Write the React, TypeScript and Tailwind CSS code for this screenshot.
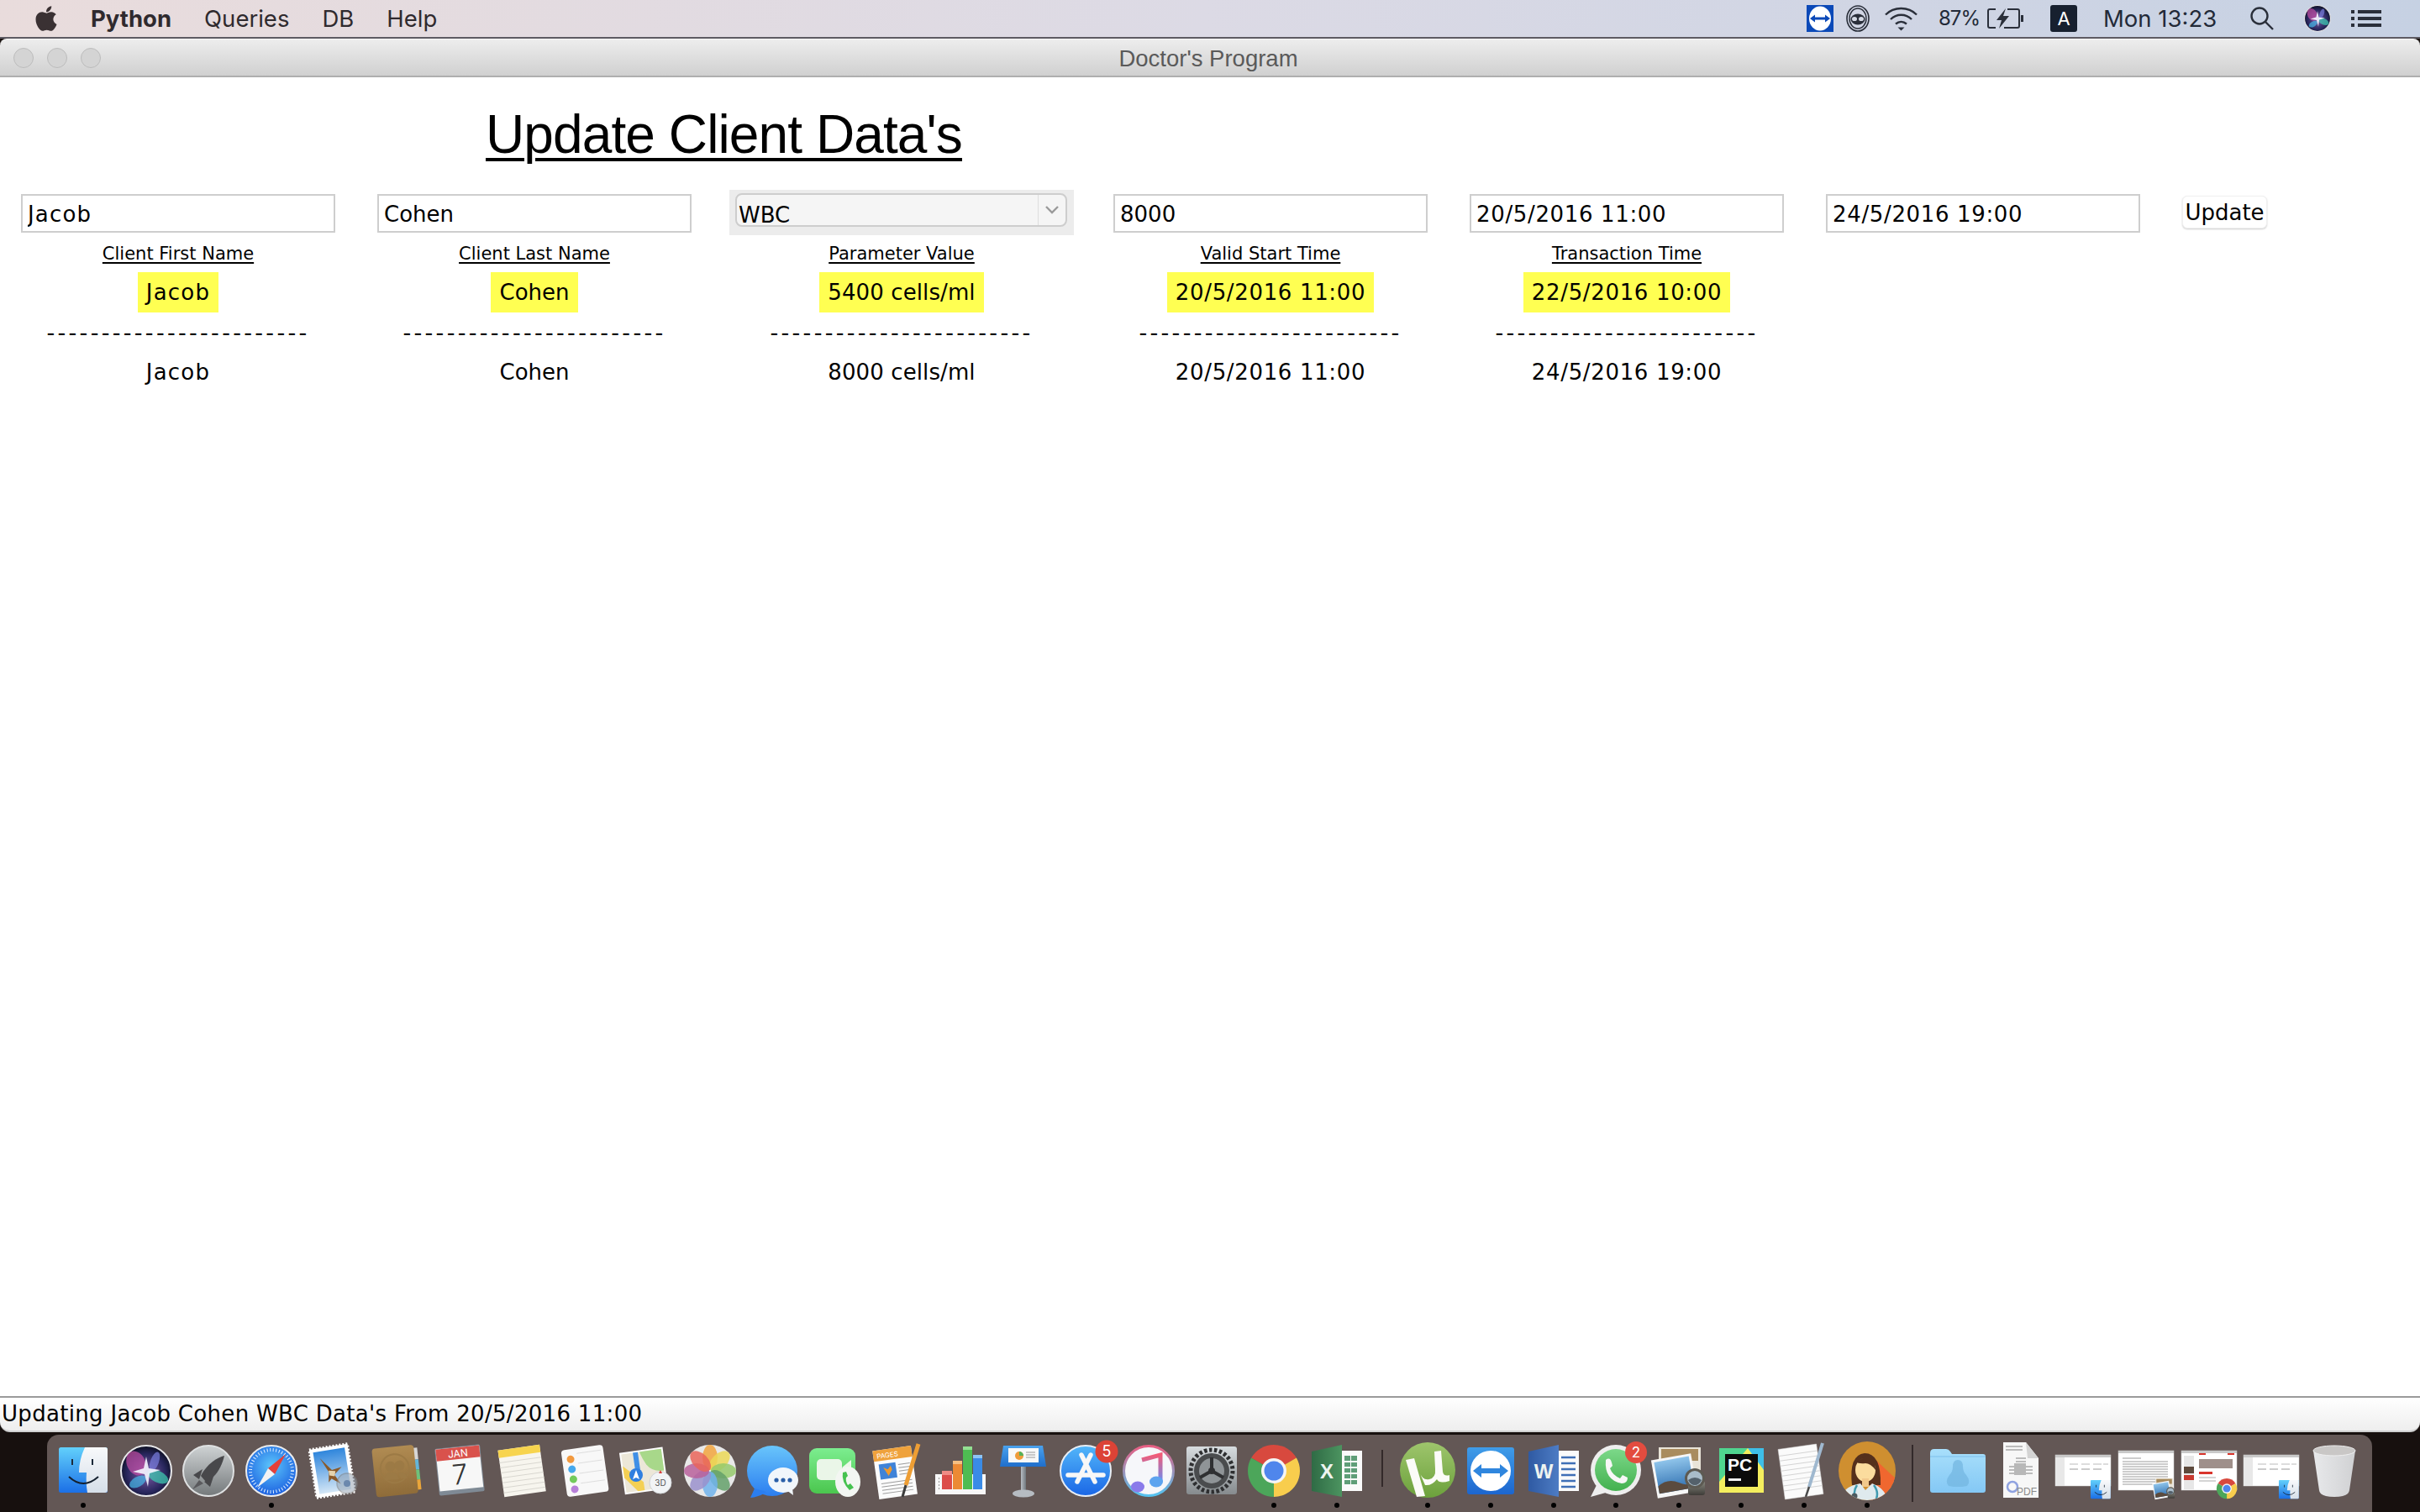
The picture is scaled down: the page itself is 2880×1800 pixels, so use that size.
import * as React from 'react';
import { FaApple } from 'react-icons/fa';

const body = "font-['DejaVu_Sans',sans-serif]";

const nameTrack = 'tracking-[1.2px]';
const dateTrack = 'tracking-[0.65px]';

const columns = [
  { key: 'first', label: 'Client First Name', current: 'Jacob', next: 'Jacob', track: nameTrack },
  { key: 'last', label: 'Client Last Name', current: 'Cohen', next: 'Cohen', track: '' },
  { key: 'param', label: 'Parameter Value', current: '5400 cells/ml', next: '8000 cells/ml', track: 'tracking-[0.1px]' },
  { key: 'start', label: 'Valid Start Time', current: '20/5/2016 11:00', next: '20/5/2016 11:00', track: dateTrack },
  { key: 'trans', label: 'Transaction Time', current: '22/5/2016 10:00', next: '24/5/2016 19:00', track: dateTrack },
];

function Grad({ id, from, to, h }: { id: string; from: string; to: string; h?: boolean }) {
  return (
    <linearGradient id={id} x1="0" y1="0" x2={h ? '1' : '0'} y2={h ? '0' : '1'}>
      <stop offset="0" stopColor={from} />
      <stop offset="1" stopColor={to} />
    </linearGradient>
  );
}

function Ico({ children }: { children: React.ReactNode }) {
  return (
    <svg viewBox="0 0 72 72" className="h-[72px] w-[72px] overflow-visible">
      {children}
    </svg>
  );
}

/* ---------- dock drawings (72 box, pixel units) ---------- */

function FinderArt() {
  return (
    <g>
      <defs>
        <Grad id="fnb" from="#62d0fb" to="#1b6fe6" />
        <Grad id="fnw" from="#f8f9fb" to="#d6dfe9" />
      </defs>
      <rect x="7" y="9" width="58" height="54" rx="2.5" fill="url(#fnb)" />
      <path d="M38 9H62q3 0 3 3V60q0 3-3 3H41Q39 52 40 39H31Q31 24 38 9Z" fill="url(#fnw)" />
      <path d="M23 23v7M47 23v7" stroke="#1c2a3a" strokeWidth="2" />
      <path d="M19 44Q36 60 54 44" stroke="#14202e" strokeWidth="2" fill="none" />
    </g>
  );
}

function SiriArt() {
  return (
    <g>
      <defs>
        <radialGradient id="sir" cx="0.5" cy="0.55" r="0.55">
          <stop offset="0" stopColor="#7f5ca8" />
          <stop offset="0.7" stopColor="#27265c" />
          <stop offset="1" stopColor="#0c0f20" />
        </radialGradient>
      </defs>
      <circle cx="36" cy="37" r="30" fill="url(#sir)" stroke="#e8e8ea" strokeWidth="2" />
      <ellipse cx="24" cy="28" rx="11" ry="15" fill="#c34fa5" opacity="0.7" transform="rotate(-25 24 28)" />
      <ellipse cx="50" cy="44" rx="13" ry="7" fill="#3fd0b4" opacity="0.7" transform="rotate(25 50 44)" />
      <ellipse cx="26" cy="50" rx="11" ry="6" fill="#47b8e8" opacity="0.7" transform="rotate(-30 26 50)" />
      <ellipse cx="46" cy="26" rx="5" ry="12" fill="#7a7fe0" opacity="0.7" transform="rotate(20 46 26)" />
      <path d="M36 20L39 34 53 36 40 40 38 56 34 41 20 38 33 34Z" fill="#f4f6ff" opacity="0.9" />
    </g>
  );
}

function ChromeArt() {
  return (
    <g>
      <path d="M36 37L9.15 21.5A31 31 0 0 1 62.85 21.5Z" fill="#d8493e" />
      <path d="M36 37L62.85 21.5A31 31 0 0 1 36 68Z" fill="#f8cd4d" />
      <path d="M36 37L36 68A31 31 0 0 1 9.15 21.5Z" fill="#4ca65a" />
      <circle cx="36" cy="37" r="15" fill="#f5f5f5" />
      <circle cx="36" cy="37" r="11.5" fill="#4f86ec" />
    </g>
  );
}

function PreviewArt() {
  return (
    <g>
      <defs>
        <Grad id="pvs" from="#8fc4ea" to="#2f6fb0" />
        <Grad id="pvl" from="#8a8a80" to="#3e3c38" />
      </defs>
      <rect x="12" y="9" width="50" height="44" fill="#e9e4d8" />
      <rect x="15" y="11" width="44" height="14" fill="#a98c5e" />
      <g transform="rotate(-10 30 40)">
        <rect x="6" y="20" width="48" height="46" fill="#f6f6f6" />
        <rect x="9" y="23" width="42" height="38" fill="url(#pvs)" />
        <path d="M9 52Q22 44 34 52T51 50V61H9Z" fill="#5b4b3e" />
      </g>
      <rect x="47" y="49" width="20" height="17" rx="3" fill="url(#pvl)" />
      <circle cx="55" cy="46" r="12" fill="#5d5a52" />
      <circle cx="55" cy="46" r="9" fill="#a9bcc9" />
      <path d="M47 48Q55 42 63 48 60 54 55 54 50 54 47 48Z" fill="#54616b" />
    </g>
  );
}

function Finder() {
  return <Ico><FinderArt /></Ico>;
}

function Siri() {
  return <Ico><SiriArt /></Ico>;
}

function Launchpad() {
  return (
    <Ico>
      <defs><Grad id="lpg" from="#cfd3d4" to="#74797b" /></defs>
      <circle cx="36" cy="37" r="30" fill="url(#lpg)" stroke="#dfe1e2" strokeWidth="2" />
      <path d="M55 19C44 22 33 31 27 43L33 50C45 45 52 32 55 19Z" fill="#48484b" />
      <path d="M29 35L18 42 25 47ZM42 44L38 56 31 50Z" fill="#48484b" />
      <path d="M25 48L17 59 30 52Z" fill="#5a5a5d" />
    </Ico>
  );
}

function Safari() {
  return (
    <Ico>
      <defs>
        <radialGradient id="sfg" cx="0.5" cy="0.4" r="0.6">
          <stop offset="0" stopColor="#5cc6fb" />
          <stop offset="1" stopColor="#1b5fe0" />
        </radialGradient>
      </defs>
      <circle cx="36" cy="37" r="30" fill="url(#sfg)" stroke="#ececec" strokeWidth="2" />
      <circle cx="36" cy="37" r="25" fill="none" stroke="#dfeeff" strokeWidth="4" strokeDasharray="1 2.6" />
      <path d="M53 17L40 41 32 34Z" fill="#e5403a" />
      <path d="M19 57L40 41 32 34Z" fill="#f3f3f3" />
    </Ico>
  );
}

function Mail() {
  return (
    <Ico>
      <defs><Grad id="mlg" from="#2f86dc" to="#d3e6f6" /></defs>
      <g transform="rotate(-9 34 36)">
        <rect x="11" y="8" width="46" height="58" fill="#fff" stroke="#fff" strokeWidth="3" strokeDasharray="2 2" />
        <rect x="15" y="12" width="38" height="50" fill="url(#mlg)" />
        <path d="M22 20L34 36 46 34 36 42 42 54 32 46 28 50 30 38Z" fill="#8a5a2a" />
        <path d="M30 36L38 38 36 44 30 42Z" fill="#e5d3ad" />
      </g>
      <circle cx="52" cy="52" r="12" fill="#9aa7b5" opacity="0.55" stroke="#7f7f7f" strokeWidth="1.5" />
      <circle cx="52" cy="52" r="4" fill="#6b88ad" />
    </Ico>
  );
}

function Contacts() {
  return (
    <Ico>
      <defs><Grad id="ctg" from="#b08b52" to="#8f6c39" /></defs>
      <g transform="rotate(-6 36 36)">
        <rect x="56" y="12" width="7" height="14" fill="#d7d7d7" />
        <rect x="56" y="26" width="7" height="12" fill="#64b6d9" />
        <rect x="56" y="38" width="7" height="12" fill="#6fc27a" />
        <rect x="56" y="50" width="7" height="12" fill="#eaa63a" />
        <rect x="9" y="8" width="50" height="58" rx="4" fill="url(#ctg)" />
        <circle cx="34" cy="34" r="17" fill="none" stroke="#9c7a45" strokeWidth="2" />
        <circle cx="29" cy="31" r="6" fill="#9c7a45" />
        <circle cx="40" cy="31" r="6" fill="#9c7a45" />
        <path d="M20 47Q22 37 29 38 35 37 38 47ZM37 40Q45 37 48 47H40Z" fill="#9c7a45" />
      </g>
    </Ico>
  );
}

function Calendar() {
  return (
    <Ico>
      <g transform="rotate(-6 36 36)">
        <rect x="9" y="8" width="54" height="56" rx="2" fill="#7f8a95" />
        <rect x="10" y="9" width="52" height="50" fill="#f7f7f7" />
        <rect x="10" y="9" width="52" height="14" fill="#d9524c" />
        <text x="36" y="20.5" textAnchor="middle" fontSize="12" fill="#fff" fontFamily="Inter, sans-serif">JAN</text>
        <text x="36" y="53" textAnchor="middle" fontSize="33" fill="#333" fontFamily="Inter, sans-serif" fontWeight="300">7</text>
      </g>
    </Ico>
  );
}

function Notes() {
  return (
    <Ico>
      <g transform="rotate(-8 36 36)">
        <rect x="11" y="9" width="50" height="56" fill="#f7f5ee" />
        <rect x="11" y="9" width="50" height="9" fill="#f7d44e" />
        <path d="M11 24H61M11 30H61M11 36H61M11 42H61M11 48H61M11 54H61M11 60H61" stroke="#d9d7d0" strokeWidth="1" />
      </g>
    </Ico>
  );
}

function Reminders() {
  return (
    <Ico>
      <g transform="rotate(-8 36 36)">
        <rect x="11" y="9" width="50" height="56" rx="4" fill="#f8f8f8" />
        <circle cx="21" cy="21" r="4.5" fill="#f29a3f" />
        <circle cx="21" cy="33" r="4.5" fill="#44a8ec" />
        <circle cx="21" cy="45" r="4.5" fill="#72ca5c" />
        <circle cx="21" cy="57" r="4.5" fill="#b77fd8" />
        <path d="M29 15H58M29 27H58M29 39H58M29 51H58" stroke="#dedede" strokeWidth="1" />
      </g>
    </Ico>
  );
}

function Maps() {
  return (
    <Ico>
      <g transform="rotate(-8 32 36)">
        <rect x="6" y="12" width="52" height="50" fill="#fdfdfd" />
        <rect x="8" y="14" width="48" height="46" fill="#ece7d8" />
        <path d="M30 14H56V40Q42 40 36 30 32 22 30 14Z" fill="#a8d88a" />
        <path d="M8 28L30 50V60H22L8 42Z" fill="#f4d053" />
        <path d="M22 14H28V44H22Z" fill="#3f8fe6" />
      </g>
      <circle cx="23" cy="42" r="8" fill="#2f7fe0" />
      <path d="M23 36L27 47 23 45 19 47Z" fill="#fff" />
      <circle cx="52" cy="51" r="13" fill="#f2f4f6" stroke="#cfd3d6" />
      <text x="52" y="55" textAnchor="middle" fontSize="10" fill="#555" fontFamily="Inter, sans-serif">3D</text>
      <path d="M52 36L54 40H50Z" fill="#d9423c" />
    </Ico>
  );
}

function Photos() {
  const petals = ['#f2a53e', '#ebd857', '#95c96b', '#64a06a', '#70b3ec', '#9a90cc', '#b9609b', '#e9655a'];
  return (
    <Ico>
      <circle cx="36" cy="37" r="31" fill="#e8e8e8" />
      {petals.map((c, i) => (
        <ellipse key={c} cx="36" cy="21" rx="9" ry="15" fill={c} opacity="0.85" transform={`rotate(${i * 45} 36 37)`} />
      ))}
    </Ico>
  );
}

function Messages() {
  return (
    <Ico>
      <defs><Grad id="msg" from="#69c5fb" to="#2b7ef0" /></defs>
      <circle cx="35" cy="37" r="30" fill="url(#msg)" />
      <path d="M14 58L9 69Q20 68 28 62Z" fill="#2b7ef0" />
      <ellipse cx="48" cy="48" rx="18" ry="15" fill="#f1f6fb" />
      <path d="M52 60L60 66 59 57Z" fill="#f1f6fb" />
      <circle cx="40" cy="48" r="2.6" fill="#2b5fa8" />
      <circle cx="48" cy="48" r="2.6" fill="#2b5fa8" />
      <circle cx="56" cy="48" r="2.6" fill="#2b5fa8" />
    </Ico>
  );
}

function FaceTime() {
  return (
    <Ico>
      <defs><Grad id="ftg" from="#7ced8f" to="#4bc64e" /></defs>
      <rect x="5" y="10" width="55" height="54" rx="9" fill="url(#ftg)" />
      <rect x="14" y="23" width="30" height="25" rx="5" fill="#eaf6e8" />
      <path d="M44 33L55 24V46Z" fill="#eaf6e8" />
      <ellipse cx="51" cy="50" rx="15" ry="18" fill="#f3f6f2" />
      <path d="M45 39Q43 50 53 60L58 57 54 52 51 54Q48 49 49 45L51 43 49 38Z" fill="#46c24f" />
    </Ico>
  );
}

function Pages() {
  return (
    <Ico>
      <g transform="rotate(-8 32 38)">
        <rect x="9" y="10" width="46" height="58" fill="#fbfbfb" />
        <rect x="9" y="10" width="46" height="13" fill="#efa23c" />
        <text x="13" y="20" fontSize="8" fill="#fff" fontFamily="Inter, sans-serif">PAGES</text>
        <rect x="14" y="27" width="20" height="18" fill="#3f83d8" />
        <path d="M24 42L19 31 24 34 28 30 29 35Z" fill="#ef9a2e" />
        <path d="M37 30H51M37 34H51M37 38H51M37 42H51M14 50H51M14 54H51M14 58H51M14 62H51" stroke="#9d9d9d" strokeWidth="1" />
      </g>
      <path d="M60 5L45 54" stroke="#ee9e34" strokeWidth="5" />
      <path d="M45 54L41 68" stroke="#3c3c3c" strokeWidth="3" />
    </Ico>
  );
}

function Numbers() {
  return (
    <Ico>
      <rect x="6" y="41" width="60" height="24" fill="#f7f7f7" />
      <path d="M10 46h1M10 50h1M10 54h1M10 58h1" stroke="#999" strokeWidth="2" />
      <rect x="14" y="37" width="12" height="22" fill="#dc4d4a" />
      <rect x="14" y="37" width="12" height="5" fill="#ef8b85" />
      <rect x="27" y="25" width="11" height="34" fill="#ec8a35" />
      <rect x="27" y="25" width="11" height="4" fill="#f5bf82" />
      <rect x="39" y="8" width="11" height="51" fill="#4ebc52" />
      <rect x="39" y="8" width="11" height="4" fill="#93e092" />
      <rect x="51" y="18" width="11" height="41" fill="#3a8be6" />
      <rect x="51" y="18" width="11" height="4" fill="#8dc4f4" />
    </Ico>
  );
}

function Keynote() {
  return (
    <Ico>
      <defs>
        <Grad id="kng" from="#4aa2ee" to="#1f6ecb" />
        <Grad id="kns" from="#b8bec4" to="#70777d" h />
      </defs>
      <rect x="33" y="32" width="6" height="30" fill="url(#kns)" />
      <ellipse cx="36" cy="64" rx="13" ry="4.5" fill="#b6bcc2" />
      <path d="M12 7H59L63 32H8Z" fill="url(#kng)" />
      <rect x="18" y="10" width="36" height="17" fill="#f8f8f8" />
      <circle cx="31" cy="19" r="5" fill="#ef9c3a" />
      <path d="M31 19V14A5 5 0 0 1 36 19Z" fill="#55b15a" />
      <path d="M39 15H50M39 18H50M39 21H50" stroke="#999" strokeWidth="1" />
    </Ico>
  );
}

function AppStore() {
  return (
    <Ico>
      <defs><Grad id="asg" from="#52b6f9" to="#1a66e6" /></defs>
      <circle cx="36" cy="37" r="30" fill="url(#asg)" stroke="#e9eef4" strokeWidth="2" />
      <path d="M31 18L47 50M42 18L26 50" stroke="#f7f7f7" strokeWidth="5.5" strokeLinecap="round" />
      <path d="M15 42H57" stroke="#f7f7f7" strokeWidth="5.5" strokeLinecap="round" />
      <circle cx="61" cy="14" r="13.5" fill="#dc4336" />
      <text x="61" y="20" textAnchor="middle" fontSize="18" fill="#fff" fontFamily="Inter, sans-serif">5</text>
    </Ico>
  );
}

function Music() {
  return (
    <Ico>
      <defs>
        <Grad id="mua" from="#e75f83" to="#54c3f0" />
        <Grad id="mub" from="#f25c78" to="#6b8cf0" />
      </defs>
      <circle cx="36" cy="37" r="29.5" fill="#f6f7fa" stroke="url(#mua)" strokeWidth="3" />
      <path d="M28 24L50 18V50" fill="none" stroke="url(#mub)" strokeWidth="5" />
      <path d="M28 24V56" fill="none" stroke="url(#mub)" strokeWidth="5" />
      <ellipse cx="23" cy="56" rx="8" ry="6.5" fill="#8a7bea" />
      <ellipse cx="45" cy="50" rx="8" ry="6.5" fill="#5da4ef" />
    </Ico>
  );
}

function SysPrefs() {
  return (
    <Ico>
      <defs><Grad id="spg" from="#d7dcdf" to="#868b8e" /></defs>
      <rect x="6" y="8" width="60" height="57" rx="3" fill="url(#spg)" />
      <circle cx="36" cy="37" r="25" fill="none" stroke="#2e2f31" strokeWidth="5" strokeDasharray="3.5 2.5" />
      <circle cx="36" cy="37" r="21" fill="#4a4c4e" />
      <circle cx="36" cy="37" r="15" fill="#8f9497" />
      <path d="M36 37V21M36 37L50 45M36 37L22 45" stroke="#2f3032" strokeWidth="4" />
      <circle cx="36" cy="37" r="4" fill="#2f3032" />
    </Ico>
  );
}

function Chrome() {
  return <Ico><ChromeArt /></Ico>;
}

function Book({ id, from, to, letter, line }: { id: string; from: string; to: string; letter: string; line: string }) {
  return (
    <Ico>
      <defs><Grad id={id} from={from} to={to} h /></defs>
      <rect x="42" y="13" width="24" height="48" fill="#fafafa" />
      {letter === 'X' ? (
        <path d="M45 19h7v6h-7zM53 19h7v6h-7zM45 27h7v5h-7zM53 27h7v5h-7zM45 34h7v5h-7zM53 34h7v5h-7zM45 41h7v5h-7zM53 41h7v5h-7zM45 48h7v5h-7zM53 48h7v5h-7z" fill={line} />
      ) : (
        <path d="M45 21H62M45 28H62M45 35H62M45 42H62M45 49H62M45 56H62" stroke={line} strokeWidth="2.5" />
      )}
      <path d="M6 14L42 6V68L6 61Z" fill={`url(#${id})`} />
      <text x="24" y="46" textAnchor="middle" fontSize="24" fontWeight="600" fill="#eef4f0" fontFamily="'Liberation Sans', sans-serif">{letter}</text>
    </Ico>
  );
}

function Torrent() {
  return (
    <Ico>
      <defs><Grad id="utg" from="#9ec56c" to="#6ca13c" /></defs>
      <circle cx="36" cy="36" r="33" fill="url(#utg)" />
      <path d="M10 24L20 22 33 67 23 68Z" fill="#fbfbf8" />
      <path d="M26 38Q30 49 38 47 46 45 45 35L44 14 52 13 54 38Q55 44 62 42L62 49Q50 53 47 47 41 55 33 54Z" fill="#fbfbf8" />
    </Ico>
  );
}

function TeamViewer() {
  return (
    <Ico>
      <defs><Grad id="tvg" from="#3f9ce8" to="#1c66cf" /></defs>
      <rect x="8" y="9" width="56" height="56" rx="3" fill="url(#tvg)" />
      <circle cx="36" cy="37" r="24" fill="#fff" />
      <path d="M15 37L25 29V34H47V29L57 37 47 45V40H25V45Z" fill="#2f86de" />
    </Ico>
  );
}

function WhatsApp() {
  return (
    <Ico>
      <defs><Grad id="wag" from="#7cd889" to="#43b14f" /></defs>
      <circle cx="36" cy="36" r="30" fill="#eeeeee" />
      <path d="M14 52L6 68 24 63Z" fill="#eeeeee" />
      <circle cx="36" cy="36" r="25" fill="url(#wag)" />
      <path d="M24 24Q29 20 31 27L32 31 29 34Q32 42 41 46L44 42 50 45Q50 52 43 52 22 48 24 24Z" fill="#f7f7f7" />
      <circle cx="60" cy="15" r="13" fill="#e34c3f" />
      <text x="60" y="21" textAnchor="middle" fontSize="17" fill="#fff" fontFamily="Inter, sans-serif">2</text>
    </Ico>
  );
}

function Preview() {
  return <Ico><PreviewArt /></Ico>;
}

function PyCharm() {
  return (
    <Ico>
      <rect x="10" y="10" width="53" height="53" fill="#f4ee5e" />
      <path d="M10 10H44L10 50Z" fill="#4fd58f" />
      <path d="M44 10H63V36Z" fill="#3ebfe8" />
      <rect x="17" y="17" width="39" height="39" fill="#0b0b0b" />
      <text x="20" y="37" fontSize="21" fontWeight="700" fill="#fff" fontFamily="'Liberation Sans', sans-serif">PC</text>
      <rect x="21" y="46" width="15" height="3" fill="#f2f2f2" />
    </Ico>
  );
}

function TextEdit() {
  return (
    <Ico>
      <g transform="rotate(-8 32 38)">
        <rect x="9" y="8" width="46" height="60" fill="#fbfbfb" stroke="#dddddd" strokeWidth="0.5" />
        <path d="M9 16H55M9 22H55M9 28H55M9 34H55M9 40H55M9 46H55M9 52H55M9 58H55" stroke="#d4d4d4" strokeWidth="1" />
      </g>
      <path d="M58 4L42 56" stroke="#9fb8cf" strokeWidth="4" />
      <path d="M42 56L38 68" stroke="#4b4b4b" strokeWidth="2.5" />
    </Ico>
  );
}

function Doctor() {
  return (
    <Ico>
      <defs>
        <clipPath id="dcc"><ellipse cx="36" cy="37" rx="34" ry="35" /></clipPath>
      </defs>
      <g clipPath="url(#dcc)">
        <rect x="0" y="0" width="72" height="72" fill="#cf8f30" />
        <path d="M42 20L72 48V72H40Z" fill="#f0672f" />
        <path d="M18 54Q14 18 33 16 53 16 52 54Z" fill="#55301c" />
        <ellipse cx="34" cy="36" rx="12" ry="14" fill="#fbdc9e" />
        <path d="M30 46H38V56H30Z" fill="#f2c98c" />
        <path d="M22 26Q32 22 36 18 47 24 46 36 40 28 34 28 26 29 22 26Z" fill="#55301c" />
        <path d="M4 72Q6 56 28 52L34 60 42 52Q58 58 60 72Z" fill="#dfeaee" />
        <path d="M24 54Q20 60 21 66M44 54Q50 62 47 70" stroke="#3f9ab0" strokeWidth="2.5" fill="none" />
        <circle cx="21" cy="67" r="3.5" fill="#4c5a60" />
      </g>
    </Ico>
  );
}

function Folder() {
  return (
    <Ico>
      <defs><Grad id="fdg" from="#a8dffb" to="#84c8f5" /></defs>
      <path d="M3 16Q3 11 8 11H22Q25 11 27 14L29 17H66Q69 17 69 20V60Q69 63 66 63H6Q3 63 3 60Z" fill="url(#fdg)" />
      <path d="M3 20H69" stroke="#7fc0ec" strokeWidth="1" />
      <path d="M36 24Q42 24 42 32 42 38 46 42 52 50 47 55L41 56H31L25 55Q20 50 26 42 30 38 30 32 30 24 36 24Z" fill="#72b5e0" opacity="0.7" />
    </Ico>
  );
}

function Pdf() {
  return (
    <Ico>
      <path d="M15 3H42L57 22V69H15Z" fill="#f7f7f7" />
      <path d="M42 3L57 22H44Z" fill="#d4d4d4" />
      <path d="M18 8H38M18 12H38M30 22H42M30 26H42M22 32H50M22 36H50M22 40H50" stroke="#a9a9a9" strokeWidth="1.5" />
      <rect x="28" y="28" width="14" height="14" fill="#b8b8b8" />
      <circle cx="26" cy="56" r="6" fill="none" stroke="#8fa2e0" strokeWidth="2.5" />
      <text x="43" y="66" textAnchor="middle" fontSize="12" fill="#8a8a8a" fontFamily="'Liberation Sans', sans-serif">PDF</text>
    </Ico>
  );
}

function Thumb({ kind }: { kind: 'folder' | 'doc' | 'web' }) {
  const y = kind === 'folder' ? 18 : 13;
  const h = kind === 'folder' ? 37 : 47;
  return (
    <Ico>
      <rect x="3" y={y} width="66" height={h} fill="#fff" stroke="#cfcfcf" strokeWidth="0.5" />
      <rect x="3" y={y} width="66" height="3" fill="#c9c9c9" />
      {kind === 'folder' && (
        <g>
          <rect x="3" y={y + 3} width="11" height={h - 3} fill="#e8e8e8" />
          <path d="M20 29H30M34 29H44M48 29H58M60 29H66" stroke="#bbb" strokeWidth="1" />
          <path d="M20 35H30M34 35H44M48 35H58" stroke="#999" strokeWidth="1" />
        </g>
      )}
      {kind === 'doc' && (
        <path d="M8 22H30M8 26H62M8 29H62M8 32H62M8 35H62M8 38H62M8 41H62M8 44H62M8 47H50M8 50H50M8 53H44" stroke="#9b9b9b" strokeWidth="1" />
      )}
      {kind === 'web' && (
        <g>
          <rect x="6" y="19" width="12" height="40" fill="#e7e7e7" />
          <rect x="24" y="23" width="40" height="11" fill="#9f8f8a" />
          <rect x="6" y="32" width="12" height="8" fill="#5d4a3c" />
          <rect x="6" y="42" width="12" height="6" fill="#c7392f" />
          <rect x="24" y="38" width="16" height="3" fill="#d9352c" />
          <path d="M24 45H44M24 49H44" stroke="#aaa" strokeWidth="1" />
          <path d="M24 17H32M58 17H66" stroke="#d9352c" strokeWidth="2" />
        </g>
      )}
      {kind === 'folder' && (
        <g transform="translate(42.1 44.3) scale(0.41)"><FinderArt /></g>
      )}
      {kind === 'doc' && (
        <g transform="translate(42 42) scale(0.42)"><PreviewArt /></g>
      )}
      {kind === 'web' && (
        <g transform="translate(43 43.7) scale(0.39)"><ChromeArt /></g>
      )}
    </Ico>
  );
}

function Trash() {
  return (
    <Ico>
      <defs><Grad id="trg" from="#e8e9eb" to="#d0d1d3" h /></defs>
      <path d="M11 13L18 60Q19 68 36 68 53 68 54 60L61 13Z" fill="url(#trg)" />
      <ellipse cx="36" cy="13" rx="25" ry="6" fill="#c9c7c6" stroke="#efefef" strokeWidth="1" />
    </Ico>
  );
}

function Slot({ children, on }: { children: React.ReactNode; on?: boolean }) {
  return (
    <div className="flex w-[74.6px] shrink-0 flex-col items-center">
      <div className="flex h-[72px] items-center justify-center">{children}</div>
      <div className={on ? 'mt-[3px] h-[6px] w-[6px] rounded-full bg-black' : 'mt-[3px] h-[6px] w-[6px]'} />
    </div>
  );
}

function Divider({ className }: { className: string }) {
  return (
    <div className={`flex w-[34px] shrink-0 justify-center ${className}`}>
      <div className="w-[2px] bg-[#33292a]" />
    </div>
  );
}

function Dock() {
  return (
    <div className="ml-[56px] flex h-[92px] w-[2767px] rounded-t-[14px] bg-[#635755] pl-[5.7px] pt-[6px]">
      <Slot on><Finder /></Slot>
      <Slot><Siri /></Slot>
      <Slot><Launchpad /></Slot>
      <Slot on><Safari /></Slot>
      <Slot><Mail /></Slot>
      <Slot><Contacts /></Slot>
      <Slot><Calendar /></Slot>
      <Slot><Notes /></Slot>
      <Slot><Reminders /></Slot>
      <Slot><Maps /></Slot>
      <Slot><Photos /></Slot>
      <Slot><Messages /></Slot>
      <Slot><FaceTime /></Slot>
      <Slot><Pages /></Slot>
      <Slot><Numbers /></Slot>
      <Slot><Keynote /></Slot>
      <Slot><AppStore /></Slot>
      <Slot><Music /></Slot>
      <Slot><SysPrefs /></Slot>
      <Slot on><Chrome /></Slot>
      <Slot on><Book id="xlg" from="#2f6b45" to="#4c9460" letter="X" line="#5f9e78" /></Slot>
      <Divider className="mt-[12px] h-[44px]" />
      <Slot on><Torrent /></Slot>
      <Slot on><TeamViewer /></Slot>
      <Slot on><Book id="wdg" from="#2f5aa3" to="#4d7cc4" letter="W" line="#3f6fb6" /></Slot>
      <Slot on><WhatsApp /></Slot>
      <Slot on><Preview /></Slot>
      <Slot on><PyCharm /></Slot>
      <Slot on><TextEdit /></Slot>
      <Slot on><Doctor /></Slot>
      <Divider className="mt-[6px] h-[68px]" />
      <Slot><Folder /></Slot>
      <Slot><Pdf /></Slot>
      <Slot><Thumb kind="folder" /></Slot>
      <Slot><Thumb kind="doc" /></Slot>
      <Slot><Thumb kind="web" /></Slot>
      <Slot><Thumb kind="folder" /></Slot>
      <Slot><Trash /></Slot>
    </div>
  );
}

/* ---------- menu bar ---------- */

function MenuBar() {
  return (
    <div className="flex h-[46px] shrink-0 items-center border-b-[2px] border-[#5d5a62] bg-gradient-to-r from-[#e9dcdc] via-[#dcdae5] to-[#c6d1e3] pl-[41px] pr-[46px] font-['Inter',sans-serif] text-[27.5px] text-[#2f2a2e]">
      <FaApple className="h-[34px] w-[28px] text-[#3a3133]" />
      <div className="ml-[39px] pt-[1px] font-bold">Python</div>
      <div className="ml-[39px] pt-[1px]">Queries</div>
      <div className="ml-[39px] pt-[1px]">DB</div>
      <div className="ml-[39px] pt-[1px]">Help</div>
      <div className="ml-auto flex items-center text-[#232a38]">
        <svg viewBox="0 0 32 32" className="h-[32px] w-[32px]">
          <rect width="32" height="32" fill="#0b49b8" />
          <ellipse cx="16" cy="16" rx="13" ry="14.5" fill="#fff" />
          <path d="M4 16L10 11.5V14.5H22V11.5L28 16 22 20.5V17.5H10V20.5Z" fill="#0b49b8" />
        </svg>
        <svg viewBox="0 0 28 32" className="ml-[15px] h-[32px] w-[28px]">
          <ellipse cx="14" cy="16" rx="13" ry="15" fill="none" stroke="#2a2f3a" strokeWidth="1.6" />
          <ellipse cx="14" cy="16" rx="10" ry="12" fill="none" stroke="#2a2f3a" strokeWidth="1.4" />
          <ellipse cx="14" cy="17" rx="8.5" ry="6.5" fill="#2a2f3a" />
          <ellipse cx="10" cy="16.5" rx="3" ry="2.6" fill="#d5dae5" />
          <ellipse cx="18" cy="16.5" rx="3" ry="2.6" fill="#d5dae5" />
        </svg>
        <svg viewBox="0 0 41 29" className="ml-[17px] h-[29px] w-[41px]" fill="none" stroke="#2a2f3a" strokeWidth="2.4">
          <path d="M2 9.5C12 -0.5 29 -0.5 39 9.5" />
          <path d="M8 15C15 8 26 8 33 15" />
          <path d="M14 20.5C18 17 23 17 27 20.5" />
          <path d="M16.5 24.5H24.5L20.5 28.5Z" fill="#2a2f3a" stroke="none" />
        </svg>
        <div className="ml-[24px] w-[47px] whitespace-nowrap text-[24px] tracking-[-1px]">87%</div>
        <svg viewBox="0 0 44 24" className="ml-[11px] h-[24px] w-[44px]" fill="none" stroke="#2a2f3a" strokeWidth="2">
          <path d="M10 1H3Q1 1 1 3V21Q1 23 3 23H10M24 1H36Q38 1 38 3V21Q38 23 36 23H20" />
          <path d="M22 0L11 14H17L14 24 26 9H19Z" fill="#2a2f3a" stroke="none" />
          <path d="M41.5 8V16" strokeWidth="3" />
        </svg>
        <div className="ml-[31px] flex h-[32px] w-[32px] items-center justify-center rounded-[3px] bg-[#17202f] text-[22px] text-white">A</div>
        <div className="ml-[31px] w-[134px] whitespace-nowrap pt-[1px]">Mon 13:23</div>
        <svg viewBox="0 0 28 28" className="ml-[41px] h-[28px] w-[28px]" fill="none" stroke="#2a2f3a" strokeWidth="2.4">
          <circle cx="11" cy="11" r="9.5" />
          <path d="M18 18L27 27" />
        </svg>
        <svg viewBox="6 6 60 62" className="ml-[36px] h-[32px] w-[32px]">
          <SiriArt />
        </svg>
        <svg viewBox="0 0 36 20" className="ml-[24px] h-[20px] w-[36px]" fill="#2a2f3a">
          <path d="M0 0h4v4H0zM8 0h28v4H8zM0 8h4v4H0zM8 8h28v4H8zM0 16h4v4H0zM8 16h28v4H8z" />
        </svg>
      </div>
    </div>
  );
}

function TitleBar() {
  return (
    <div className="flex h-[46px] shrink-0 items-center rounded-t-[8px] border-b-[2px] border-t-[1px] border-b-[#aeaeae] border-t-[#f6f6f6] bg-gradient-to-b from-[#ededed] to-[#d0d0d0] pl-[16px]">
      <div className="flex w-[108px] gap-[16px]">
        <div className="h-[24px] w-[24px] rounded-full border border-[#bcbcbc] bg-[#d4d4d4]" />
        <div className="h-[24px] w-[24px] rounded-full border border-[#bcbcbc] bg-[#d4d4d4]" />
        <div className="h-[24px] w-[24px] rounded-full border border-[#bcbcbc] bg-[#d4d4d4]" />
      </div>
      <div className="flex-1 pr-[128px] pt-[3px] text-center font-['Liberation_Sans',sans-serif] text-[27.5px] text-[#5a5a5a]">Doctor's Program</div>
    </div>
  );
}

function Field({ value, track, className }: { value: string; track?: string; className?: string }) {
  return (
    <div className={`h-[54px] w-[374px] pt-[5px] ${className ?? ''}`}>
      <input
        readOnly
        value={value}
        className={`h-[46px] w-full border-[2px] border-[#cecece] bg-white px-[6px] pt-[2px] text-[26px] text-black outline-none ${track ?? ''}`}
      />
    </div>
  );
}

function Column({ col, top, className }: { col: (typeof columns)[number]; top: React.ReactNode; className?: string }) {
  return (
    <div className={`flex flex-col items-center ${className ?? ''}`}>
      {top}
      <div className="flex h-[44px] items-center pt-[1px] text-[21px] underline decoration-[2px] underline-offset-[3px]">{col.label}</div>
      <div className={`flex h-[48px] items-center bg-[#ffff52] px-[10px] ${col.track}`}>{col.current}</div>
      <div className="flex h-[48px] items-center text-[27px] font-medium tracking-[3.3px] text-black">------------------------</div>
      <div className={`flex h-[46px] items-center ${col.track}`}>{col.next}</div>
    </div>
  );
}

export default function App() {
  return (
    <div className={`flex h-[1800px] w-[2880px] flex-col overflow-hidden bg-[#17100e] ${body} text-[26px] text-black`}>
      <MenuBar />
      <div className="flex flex-1 flex-col">
        <TitleBar />
        <div className="flex-1 bg-white pt-[36px]">
          <h1 className="ml-[578px] font-['Liberation_Sans',sans-serif] text-[64px] leading-[64px] tracking-[-0.9px] underline decoration-[4px] underline-offset-[6px]">
            Update Client Data's
          </h1>
          <div className="mt-[34px] flex items-start pl-[25px]">
            <Column col={columns[0]} top={<Field value="Jacob" track={nameTrack} />} className="w-[374px]" />
            <Column col={columns[1]} top={<Field value="Cohen" />} className="ml-[50px] w-[374px]" />
            <Column
              col={columns[2]}
              className="ml-[45px] w-[410px]"
              top={
                <div className="flex h-[54px] w-[410px] items-start bg-[#ececec] pl-[7px] pt-[4px]">
                  <div className="flex h-[40px] w-[395px] rounded-[8px] border-[2px] border-[#cdcdcd] bg-[#f5f5f5]">
                    <div className="flex-1 pl-[2px] pt-[5px]">WBC</div>
                    <div className="flex w-[33px] items-center justify-center border-l border-[#dedede]">
                      <svg viewBox="0 0 16 10" className="h-[10px] w-[16px]" fill="none" stroke="#9a9a9a" strokeWidth="2.4">
                        <path d="M1 1L8 8 15 1" />
                      </svg>
                    </div>
                  </div>
                </div>
              }
            />
            <Column col={columns[3]} top={<Field value="8000" />} className="ml-[47px] w-[374px]" />
            <Column col={columns[4]} top={<Field value="20/5/2016 11:00" track={dateTrack} />} className="ml-[50px] w-[374px]" />
            <Field value="24/5/2016 19:00" track={dateTrack} className="ml-[50px]" />
            <div className="ml-[50px] pt-[7px]">
              <button className="flex h-[39px] w-[101px] items-center justify-center rounded-[6px] border border-[#f0f0f0] bg-white pt-[2px] text-[26px] shadow-[0_1px_2px_rgba(0,0,0,0.2)]">
                Update
              </button>
            </div>
          </div>
        </div>
        <div className="flex h-[43px] shrink-0 items-center rounded-b-[12px] border-b-[2px] border-t-[2px] border-b-[#d0d0d0] border-t-[#9a9a9a] bg-gradient-to-b from-white to-[#eeeeee] pl-[2px] tracking-[0.31px]">
          Updating Jacob Cohen WBC Data's From 20/5/2016 11:00
        </div>
        <div className="h-[3px] shrink-0" />
        <Dock />
      </div>
    </div>
  );
}
